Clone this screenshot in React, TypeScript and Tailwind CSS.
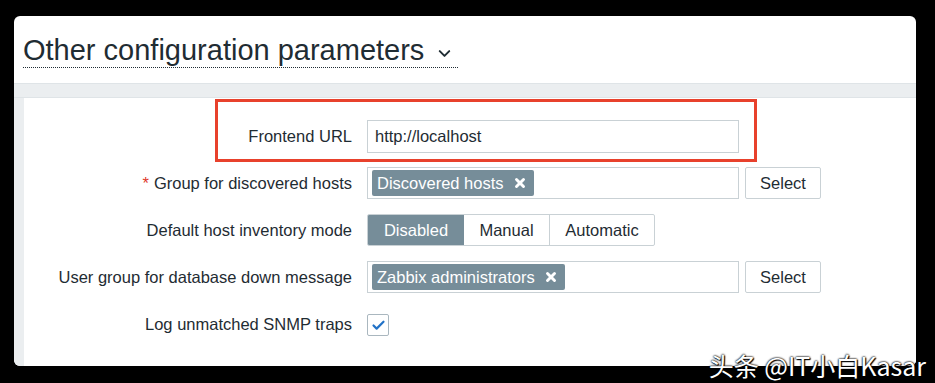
import { ChevronDown, X, Check } from 'lucide-react';

const font = { fontFamily: '"Liberation Sans", Arial, sans-serif' };

function Tag({ label }: { label: string }) {
  return (
    <span className="flex items-center h-[26px] bg-[#768d99] text-white rounded-[2px] pl-[5px] pr-[7px] gap-[9px]">
      {label}
      <X className="w-[14px] h-[14px]" strokeWidth={5} />
    </span>
  );
}

function Row({ label, required, children }: { label: string; required?: boolean; children: React.ReactNode }) {
  return (
    <div className="flex items-center gap-[15px] h-[32px]">
      <div className="w-[328px] text-right shrink-0">
        {required && <span className="text-[#e0382b] mr-[5px]">*</span>}
        {label}
      </div>
      <div className="flex items-center gap-[6px]">{children}</div>
    </div>
  );
}

function SelectButton() {
  return (
    <button className="h-[32px] w-[76px] border border-[#c9d1d5] rounded-[2px] bg-white text-[#1f2c33]">Select</button>
  );
}

export default function App() {
  return (
    <div className="relative w-[935px] h-[383px] bg-black overflow-hidden pt-[16px] pl-[14px]" style={font}>
      <div className="w-[902px] h-[350px] bg-white rounded-[6px] overflow-hidden flex flex-col text-[16.5px] text-[#1f2c33]">
        {/* Header */}
        <div className="h-[67px] shrink-0 pl-[9px] pt-[18px]">
          <div className="inline-flex items-center gap-[11px] border-b-[1.5px] border-dotted border-[#1f2c33] pb-[1px] pr-[4px]">
            <span className="text-[29px] leading-[32px]">Other configuration parameters</span>
            <ChevronDown className="w-[19px] h-[19px] mt-[6px]" strokeWidth={2.5} />
          </div>
        </div>
        <div className="h-[15px] shrink-0 bg-[#ebeef0] border-y border-[#dfe4e7]" />

        {/* Body */}
        <div className="flex-1 bg-[#ebeef0] pl-[10px]">
          <div className="relative h-full bg-white pt-[22px] flex flex-col gap-[15px]">
            <div className="absolute left-[191px] top-[1px] w-[542px] h-[63px] border-[3.5px] border-[#e8412c]" />

            <Row label="Frontend URL">
              <div className="h-[33px] w-[372px] border border-[#c9d1d5] flex items-center px-[7px]">http://localhost</div>
            </Row>
            <Row label="Group for discovered hosts" required>
              <div className="h-[32px] w-[372px] border border-[#c9d1d5] flex items-center px-[4px]">
                <Tag label="Discovered hosts" />
              </div>
              <SelectButton />
            </Row>
            <Row label="Default host inventory mode">
              <div className="flex h-[32px] border border-[#c9d1d5] rounded-[2px] overflow-hidden">
                <span className="w-[96px] flex items-center justify-center bg-[#768d99] text-white">Disabled</span>
                <span className="w-[86px] flex items-center justify-center border-r border-[#c9d1d5]">Manual</span>
                <span className="w-[104px] flex items-center justify-center">Automatic</span>
              </div>
            </Row>
            <Row label="User group for database down message">
              <div className="h-[32px] w-[372px] border border-[#c9d1d5] flex items-center px-[4px]">
                <Tag label="Zabbix administrators" />
              </div>
              <SelectButton />
            </Row>
            <Row label="Log unmatched SNMP traps">
              <div className="w-[22px] h-[22px] border border-[#aab7bf] rounded-[2px] flex items-center justify-center mt-[2px]">
                <Check className="w-[15px] h-[15px] text-[#2272c7]" strokeWidth={3.5} />
              </div>
            </Row>
          </div>
        </div>
      </div>

      <div
        className="absolute right-[9px] bottom-[3px] text-white text-[25px] leading-[30px]"
        style={{ fontFamily: '"Noto Sans CJK SC", "Noto Sans", sans-serif', textShadow: '0 0 2px #000, 0 0 2px #000, 1px 1px 1px #000' }}
      >
        头条 @IT小白Kasar
      </div>
    </div>
  );
}
